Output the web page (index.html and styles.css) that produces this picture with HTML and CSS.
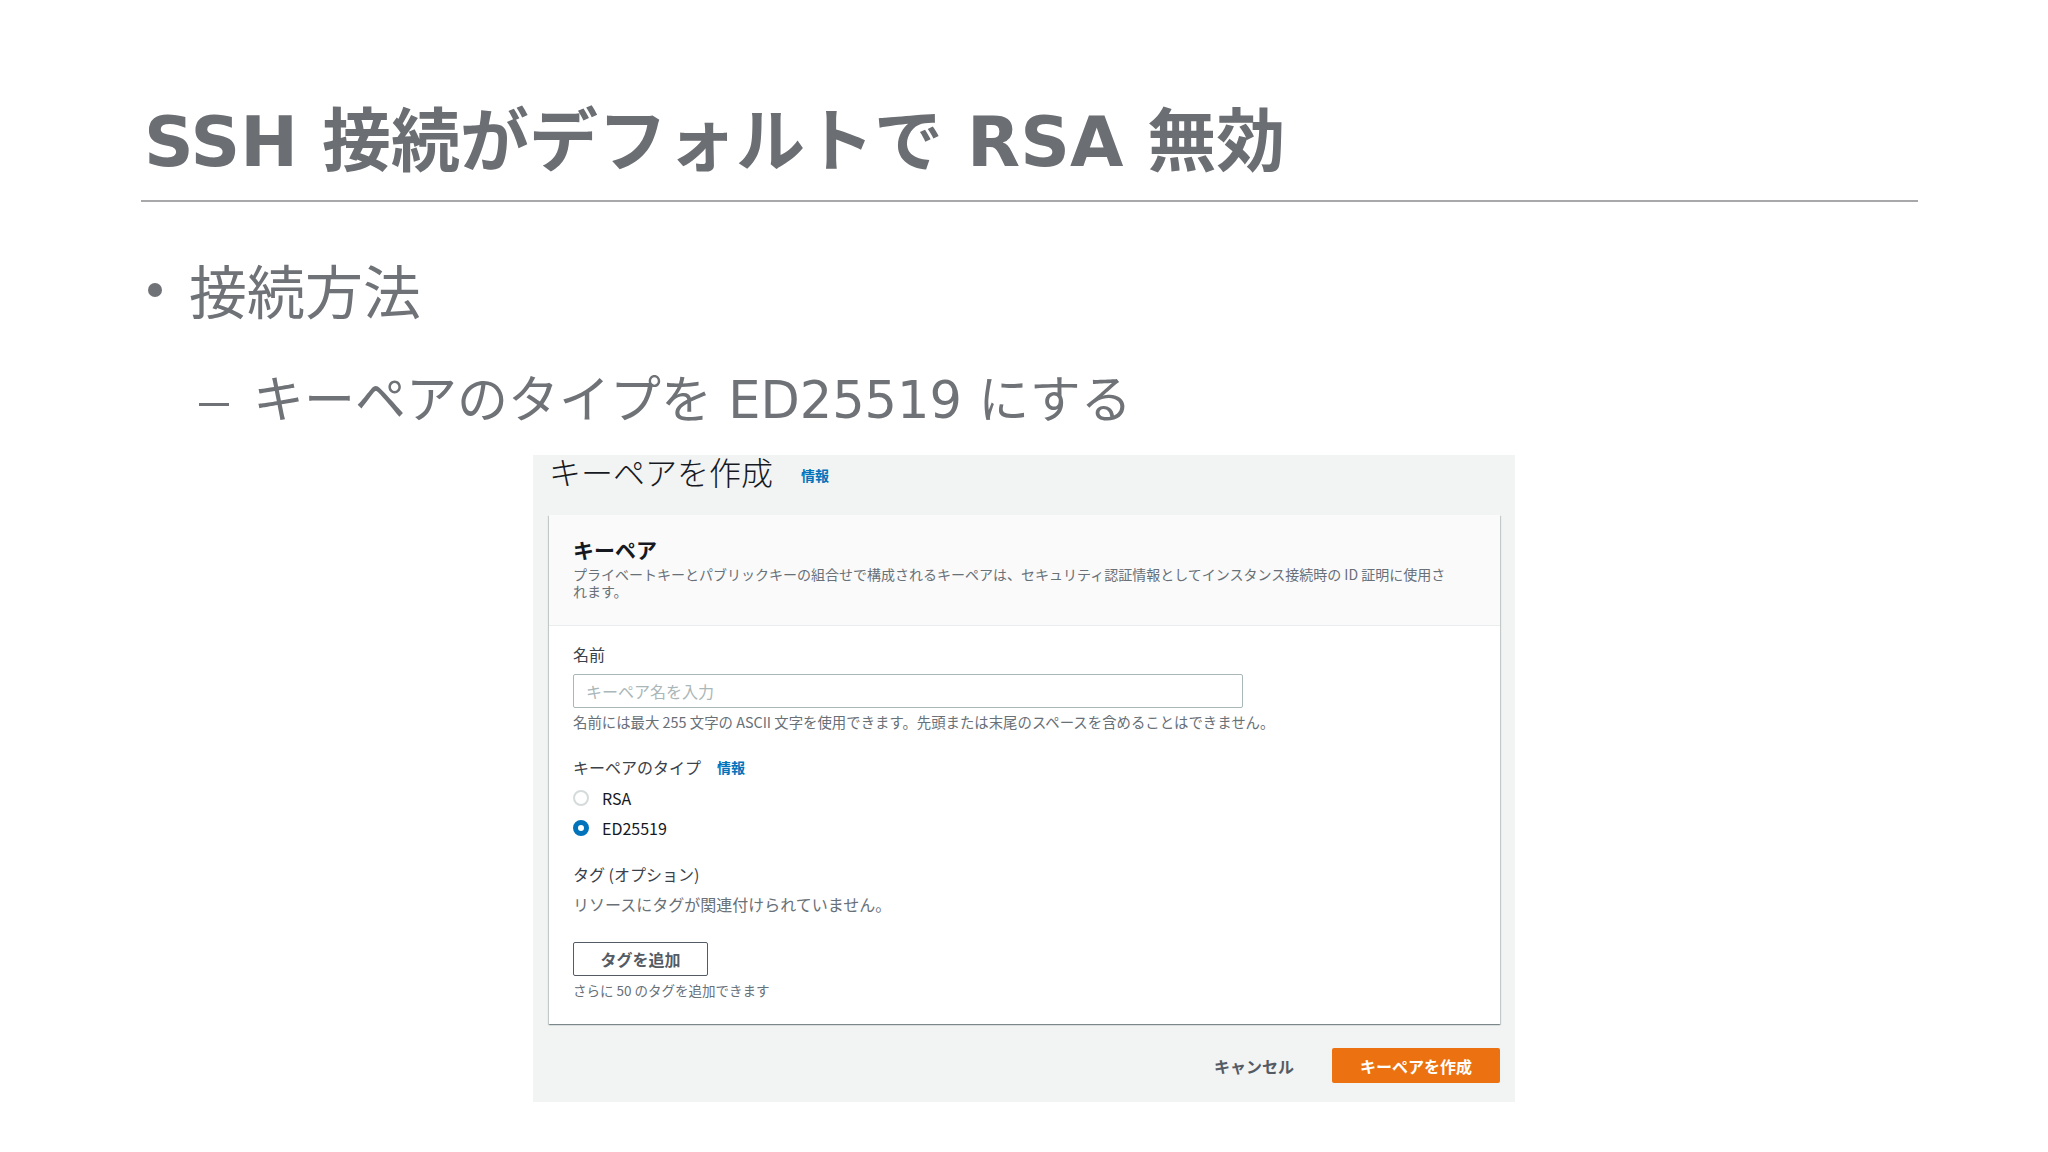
FILE: index.html
```html
<!DOCTYPE html>
<html lang="ja">
<head>
    <meta charset="utf-8">
    <link rel="stylesheet" href="styles.css">
</head>
<body>
<div class="slide">
    <h1 class="slide-title">SSH 接続がデフォルトで RSA 無効</h1>
    <hr class="title-rule">

    <ul class="bullets">
        <li class="bullet">接続方法
            <ul class="sub-bullets">
                <li class="sub-bullet">キーペアのタイプを ED25519 にする</li>
            </ul>
        </li>
    </ul>

    <div class="shot">
        <div class="shot-heading">
            <span class="shot-title">キーペアを作成</span>
            <a class="info-link">情報</a>
        </div>

        <div class="card">
            <div class="card-header">
                <h2 class="card-title">キーペア</h2>
                <p class="card-desc">プライベートキーとパブリックキーの組合せで構成されるキーペアは、セキュリティ認証情報としてインスタンス接続時の ID 証明に使用されます。</p>
            </div>

            <div class="card-body">
                <label class="field-label" for="key-name">名前</label>
                <input type="text" id="key-name" class="text-input" placeholder="キーペア名を入力">
                <p class="hint">名前には最大 255 文字の ASCII 文字を使用できます。先頭または末尾のスペースを含めることはできません。</p>

                <div class="field-label type-label">キーペアのタイプ <a class="info-link">情報</a></div>
                <div class="radio-group">
                    <label class="radio-row"><span class="radio"></span>RSA</label>
                    <label class="radio-row"><span class="radio checked"></span>ED25519</label>
                </div>

                <div class="field-label tag-label">タグ (オプション)</div>
                <p class="no-tags">リソースにタグが関連付けられていません。</p>
                <button type="button" class="btn-normal">タグを追加</button>
                <p class="hint small">さらに 50 のタグを追加できます</p>
            </div>
        </div>

        <div class="actions">
            <button type="button" class="btn-link">キャンセル</button>
            <button type="button" class="btn-primary">キーペアを作成</button>
        </div>
    </div>
</div>
</body>
</html>
```

FILE: styles.css
```css
*{
    margin: 0;
    padding: 0;
    box-sizing: border-box;
}
body {
    width: 2048px;
    height: 1152px;
    background: #fff;
    font-family: "DejaVu Sans", "Noto Sans CJK JP", sans-serif;
    overflow: hidden;
}

.slide {
    padding: 100px 130px 0 141px;
}

.slide-title {
    font-size: 69px;
    line-height: 84px;
    font-weight: bold;
    color: #6b6e72;
    padding-left: 3px;
}

.title-rule {
    border: none;
    height: 2px;
    background: #a8a8aa;
    margin-top: 16px;
}

.bullets {
    list-style: none;
    color: #6f7276;
    margin-top: 49px;
}

.bullet {
    font-family: "Noto Sans CJK JP", sans-serif;
    font-size: 58px;
    line-height: 76px;
    padding-left: 48px;
    position: relative;
}

.bullet::before {
    content: "";
    position: absolute;
    left: 7px;
    top: 32px;
    width: 14px;
    height: 14px;
    border-radius: 50%;
    background: #6f7276;
}

.sub-bullets {
    list-style: none;
    margin-top: 42px;
}

.sub-bullet {
    font-family: "DejaVu Sans", "Noto Sans CJK JP", sans-serif;
    font-size: 51px;
    line-height: 64px;
    padding-left: 66px;
    margin-left: -2px;
    position: relative;
}

.sub-bullet::before {
    content: "";
    position: absolute;
    left: 12px;
    top: 34px;
    width: 30px;
    height: 3px;
    background: #6f7276;
}

/* console screenshot */
.shot {
    width: 982px;
    margin: 22px 0 0 392px;
    background: #f2f3f3;
    padding: 0 15px 19px 16px;
    font-family: "Noto Sans CJK JP", sans-serif;
    color: #16191f;
}

.shot-heading {
    display: flex;
    align-items: flex-start;
    gap: 28px;
    height: 38px;
}

.shot-title {
    font-size: 32px;
    line-height: 32px;
    font-weight: 300;
    color: #16191f;
}

.info-link {
    font-size: 14px;
    font-weight: bold;
    color: #0073bb;
    margin-top: 10px;
}

.card {
    margin-top: 22px;
    background: #fff;
    box-shadow: 0 1px 1px 0 rgba(0, 28, 36, 0.3), 1px 1px 1px 0 rgba(0, 28, 36, 0.15), -1px 1px 1px 0 rgba(0, 28, 36, 0.15);
}

.card-header {
    background: #fafafa;
    border-bottom: 1px solid #eaeded;
    padding: 21px 24px 21px;
    height: 111px;
}

.card-title {
    font-size: 21px;
    line-height: 26px;
    font-weight: bold;
}

.card-desc {
    font-size: 14px;
    line-height: 17px;
    color: #687078;
    margin-top: 4px;
    padding-right: 24px;
}

.card-body {
    padding: 17px 24px 26px;
}

.field-label {
    display: block;
    font-size: 16px;
    line-height: 22px;
    color: #3b4148;
}

.text-input {
    display: block;
    width: 670px;
    height: 34px;
    margin-top: 9px;
    border: 1px solid #aab7b8;
    border-radius: 2px;
    padding: 0 12px;
    font-family: inherit;
    font-size: 16px;
    outline: none;
}

.text-input::placeholder {
    color: #aab7b8;
}

.hint {
    font-size: 14.4px;
    line-height: 18px;
    color: #687078;
    margin-top: 5px;
}

.hint.small {
    font-size: 13.5px;
    line-height: 16px;
    margin-top: 6px;
}

.type-label {
    margin-top: 25px;
    display: flex;
    align-items: center;
    gap: 16px;
}

.type-label .info-link {
    margin-top: 0;
}

.radio-group {
    margin-top: 5px;
}

.radio-row {
    display: flex;
    align-items: center;
    gap: 13px;
    height: 30px;
    font-size: 16px;
    color: #16191f;
}

.radio {
    width: 16px;
    height: 16px;
    border-radius: 50%;
    border: 2px solid #d5dbdb;
    background: #fff;
}

.radio.checked {
    border: 5px solid #0073bb;
}

.tag-label {
    margin-top: 20px;
}

.no-tags {
    font-size: 16px;
    line-height: 22px;
    color: #687078;
    margin-top: 8px;
}

.btn-normal {
    display: block;
    width: 135px;
    height: 34px;
    margin-top: 27px;
    border: 1px solid #545b64;
    border-radius: 2px;
    background: #fff;
    font-family: inherit;
    font-size: 16px;
    font-weight: bold;
    color: #545b64;
}

.actions {
    display: flex;
    justify-content: flex-end;
    align-items: center;
    gap: 18px;
    margin-top: 24px;
}

.btn-link {
    border: none;
    background: none;
    padding: 0 20px;
    height: 35px;
    font-family: inherit;
    font-size: 16px;
    font-weight: bold;
    color: #545b64;
}

.btn-primary {
    width: 168px;
    height: 35px;
    border: none;
    border-radius: 2px;
    background: #ec7211;
    font-family: inherit;
    font-size: 16px;
    font-weight: bold;
    color: #fff;
}
```
